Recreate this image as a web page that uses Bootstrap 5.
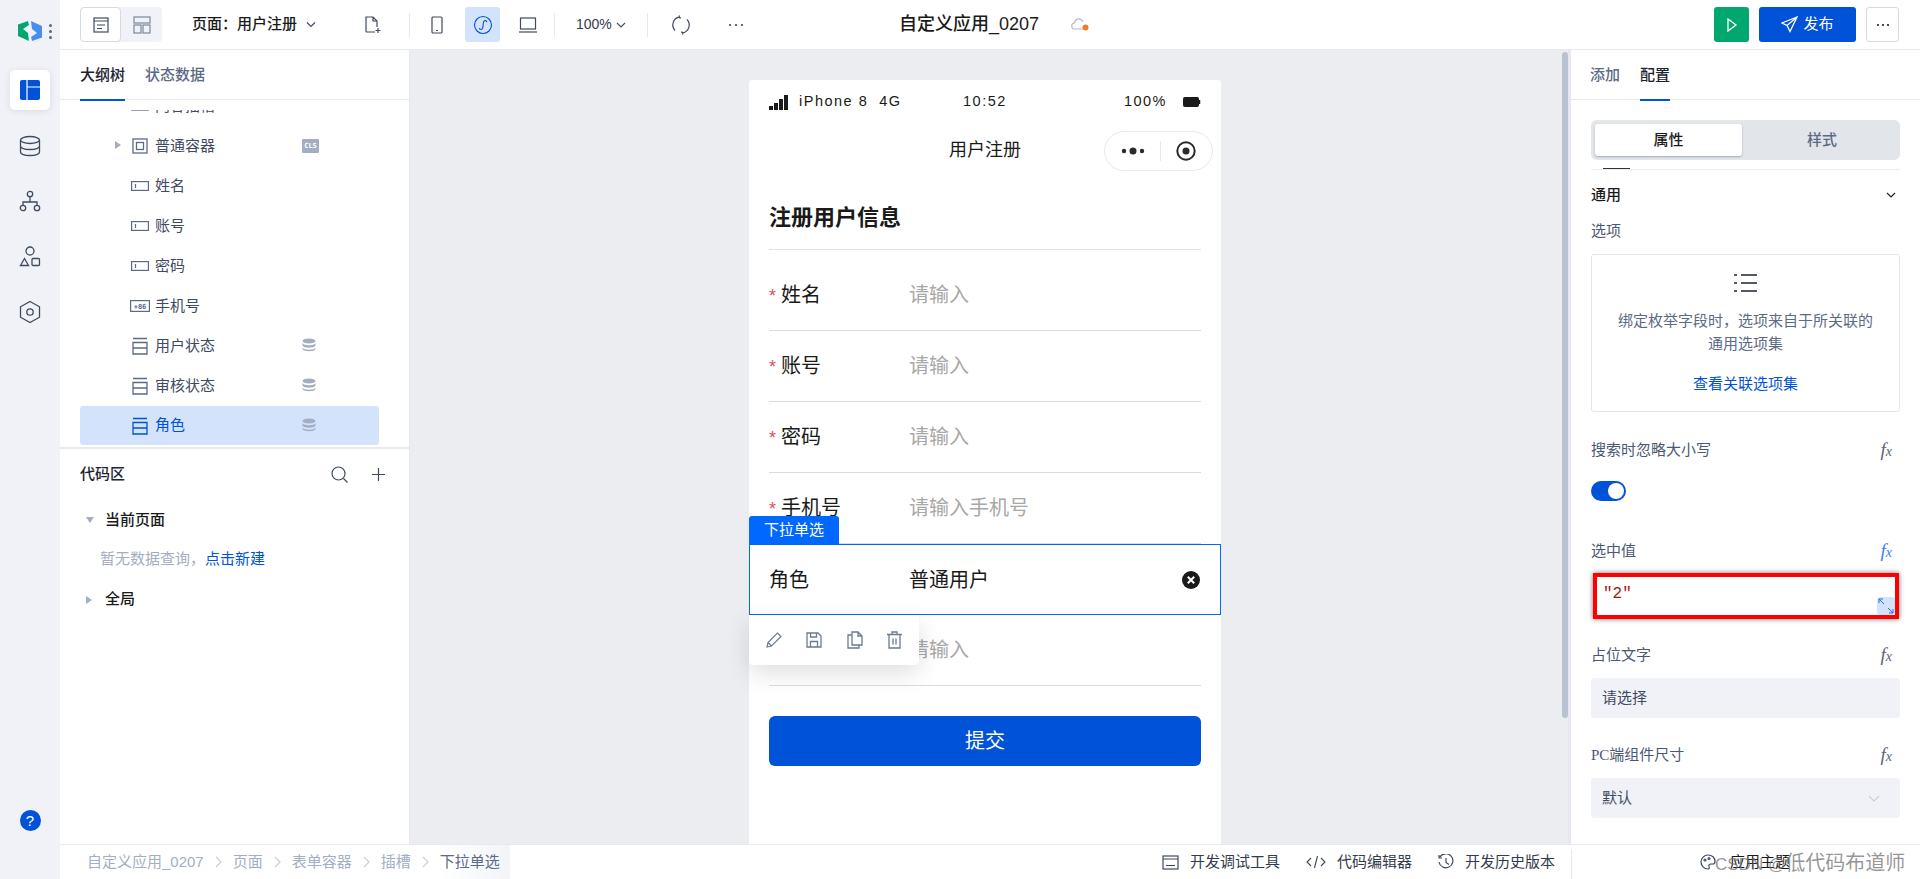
<!DOCTYPE html>
<html lang="zh-CN">
<head>
  <meta charset="UTF-8">
  <title>自定义应用_0207</title>
  <meta name="viewport" content="width=device-width, initial-scale=1">
  <link href="https://cdn.jsdelivr.net/npm/bootstrap@5.3.3/dist/css/bootstrap.min.css" rel="stylesheet">
  <style>
    html, body { height: 100%; overflow: hidden; }
    body {
      font-family: "Liberation Sans", "Noto Sans CJK SC", sans-serif;
      font-size: 15px;
      color: #1c2333;
      background: #fff;
    }
    svg { display: block; flex: none; }
    .app-shell { height: 879px; }

    /* left rail */
    .rail { width: 60px; background: #f0f2f7; padding-top: 13px; flex: none; }
    .rail-logo { height: 36px; margin-bottom: 21px; padding-left: 18px; gap: 7px; }
    .rail-dots { gap: 3px; }
    .rail-dots i { width: 3px; height: 3px; border-radius: 50%; background: #5a6478; display: block; }
    .rail-tile { width: 40px; height: 40px; margin: 0 auto 15.3px; display: flex; align-items: center; justify-content: center; border-radius: 5px; }
    .rail-tile.on { background: #fff; box-shadow: 0 1px 6px rgba(40, 60, 100, .12); margin-bottom: 16px; }
    .rail-help { width: 21px; height: 21px; border-radius: 50%; background: #0052d9; color: #fff; font-size: 15px; line-height: 21px; text-align: center; margin: auto auto 48px; }

    /* top bar */
    .topbar { height: 50px; border-bottom: 1px solid #e7e9ee; padding-left: 20px; flex: none; position: relative; }
    .seg-pages { width: 82px; height: 35px; background: #f0f2f7; border-radius: 4px; }
    .seg-pages span { width: 41px; display: flex; align-items: center; justify-content: center; }
    .seg-pages .on { background: #fff; border: 1px solid #d5dae3; border-radius: 4px; }
    .page-pick { margin-left: 30px; font-weight: 500; color: #1a1a1a; width: 162px; }
    .tool-sep { width: 1px; height: 24px; background: #e7e9ee; }
    .tool-active { width: 35px; height: 35px; background: #d3e3fb; border-radius: 3px; display: flex; align-items: center; justify-content: center; }
    .zoom-val { font-size: 14px; color: #333b4c; }
    .app-name { position: absolute; left: 839px; top: 11px; font-size: 18px; font-weight: 500; color: #1a1a1a; }
    .cloud { position: absolute; left: 1011px; top: 16px; }
    .top-actions { position: absolute; right: 21px; top: 7px; gap: 10px; }
    .act-run { width: 35px; height: 35px; background: #00a870; border-radius: 3px; }
    .act-pub { width: 97px; height: 35px; background: #0052d9; color: #fff; border-radius: 3px; gap: 5px; font-size: 15px; }
    .act-more { width: 33px; height: 35px; border: 1px solid #d5dae3; border-radius: 3px; }

    /* left panel */
    .outline { width: 350px; border-right: 1px solid #e7e9ee; flex: none; }
    .panel-tabs { height: 50px; border-bottom: 1px solid #e7e9ee; padding-left: 20px; gap: 20px; flex: none; }
    .config .panel-tabs { padding-left: 19px; }
    .panel-tab { line-height: 49px; color: #5b6a85; position: relative; height: 50px; font-weight: 500; }
    .panel-tab.on { color: #1c2333; }
    .panel-tab.on::after { content: ""; position: absolute; left: 0; right: 0; bottom: -1px; height: 2px; background: #0052d9; }
    .tree { height: 347px; flex: none; padding: 10px 30px 0 20px; }
    .tree-scroll { height: 337px; overflow: hidden; }
    .tree-row { height: 40px; padding-left: 51px; gap: 6px; color: #3f4a5f; position: relative; }
    .tree-row.cut { margin-top: -24px; }
    .tree-row .tree-ico { width: 18px; display: flex; justify-content: center; }
    .tree-row.sel { height: 39px; background: #d3e3fb; border-radius: 3px; color: #0052d9; }
    .tree-arrow { position: absolute; left: 35px; top: 15px; width: 0; height: 0; border-left: 6px solid #a3aec2; border-top: 4px solid transparent; border-bottom: 4px solid transparent; }
    .tree-tail { position: absolute; left: 222px; top: 12px; }
    .cls-tag { position: absolute; left: 222px; top: 13px; background: #a3aec2; color: #fff; width: 17px; height: 14px; font: 700 7px/14px "DejaVu Sans Mono", monospace; text-align: center; border-radius: 1px; }
    .code-area { border-top: 2px solid #e7e9ee; padding: 0 20px; flex: 1; }
    .code-head { height: 51px; font-weight: 500; color: #1c2333; }
    .code-row { height: 40px; padding-left: 25px; font-weight: 500; color: #1a1a1a; position: relative; }
    .code-row i { position: absolute; left: 6px; top: 17px; width: 0; height: 0; }
    .tri-down { border-top: 6px solid #a3aec2; border-left: 4px solid transparent; border-right: 4px solid transparent; }
    .tri-right { border-left: 6px solid #a3aec2; border-top: 4px solid transparent; border-bottom: 4px solid transparent; }
    .code-empty { height: 39px; padding-left: 20px; color: #a3aec2; }
    .code-empty a, .blue-link { color: #0052d9; text-decoration: none; }

    /* canvas and phone */
    .stage { background: #ebedf1; flex: 1; position: relative; min-width: 0; }
    .phone { width: 472px; margin-left: 339px; margin-top: 30px; background: #fff; height: 764px; position: relative; border-radius: 3px 3px 0 0; }
    .phone-status { height: 40px; padding: 4px 20px 0; font-size: 14.5px; letter-spacing: 1.5px; color: #1a1a1a; position: relative; }
    .phone-time { position: absolute; left: 214px; top: 11px; }
    .phone-nav { height: 60px; text-align: center; line-height: 60px; font-size: 18px; color: #1a1a1a; position: relative; }
    .capsule { position: absolute; left: 355px; top: 11px; width: 109px; height: 40px; background: #fff; border: 1px solid #e7e9ee; border-radius: 20px; }
    .capsule-sep { width: 1px; height: 20px; background: #e7e9ee; margin: 0 15px; }
    .form-title { margin: 0 20px 10px; height: 70px; border-bottom: 1px solid #dfe1e5; font-size: 22px; font-weight: 700; color: #1a1a1a; line-height: 75px; }
    .form-line { height: 71px; margin: 0 20px; border-bottom: 1px solid #dcdcdc; font-size: 20px; color: #1a1a1a; }
    .form-line.free { margin: 0; padding: 0 20px 0 19px; border: 1px solid #0068ff; height: 71px; margin-top: 0; position: relative; }
    .line-label { width: 140px; flex: none; }
    .req { color: #e34d59; font-size: 18px; margin-right: 5px; }
    .hint { color: #a8a8a8; }
    .clear-btn { margin-left: auto; }
    .comp-tag { position: absolute; left: 0; top: 436px; width: 90px; height: 28px; background: #0068ff; color: #fff; font-size: 15px; line-height: 28px; text-align: center; border-radius: 3px 3px 0 0; z-index: 2; }
    .comp-tools { position: absolute; left: 0; top: 535px; width: 170px; height: 50px; background: #fff; border-radius: 0 0 4px 4px; box-shadow: 0 8px 24px rgba(0, 0, 0, .13); padding: 0 17px; justify-content: space-between; z-index: 2; }
    .submit-btn { display: block; width: 432px; height: 50px; margin: 30px 20px 0; background: #0052d9; color: #fff; border: 0; border-radius: 6px; font-size: 20px; }

    .scroll-gutter { width: 11px; flex: none; background: #ebedf1; border-right: 3px solid #e5e8ee; position: relative; }
    .scroll-thumb { position: absolute; left: 2px; top: 2px; width: 6px; height: 666px; border-radius: 3px; background: #b9c2d0; }

    /* right panel */
    .config { width: 349px; flex: none; }
    .config-body { padding: 20px 20px 0; flex: 1; overflow: hidden; }
    .seg-config { height: 40px; background: #e2e5ea; border-radius: 6px; padding: 4px; color: #5b6a85; font-weight: 500; text-align: center; line-height: 32px; }
    .seg-config div { flex: 1; padding-left: 6px; }
    .seg-config .on { background: #fff; color: #1a1a1a; border-radius: 3px; box-shadow: 0 1px 2px rgba(50, 70, 100, .35); flex: none; width: 147px; padding-left: 0; }
    .sect-line { height: 10px; border-bottom: 1px solid #eceef2; position: relative; }
    .sect-line::before { content: ""; position: absolute; left: 12px; bottom: 0; width: 27px; height: 1px; background: #333; }
    .sect-head { height: 50px; font-weight: 500; color: #1a1a1a; padding-right: 4px; }
    .prop-label { color: #4b5873; height: 22px; line-height: 22px; padding-right: 8px; }
    .bind-box { height: 158px; border: 1px solid #e2e5ea; border-radius: 3px; margin-top: 12px; text-align: center; color: #5b6a85; line-height: 23px; padding-top: 18px; margin-bottom: 27px; }
    .bind-box svg { margin: 0 auto 16px; }
    .bind-box .blue-link { display: block; margin-top: 17px; }
    .fake-switch { width: 35px; height: 20px; border-radius: 10px; background: #0052d9; margin: 20px 0 39px; position: relative; }
    .fake-switch::after { content: ""; position: absolute; right: 2px; top: 2px; width: 16px; height: 16px; border-radius: 50%; background: #fff; }
    .fx { font-family: "Liberation Serif", serif; font-style: italic; font-size: 19px; color: #5a6478; line-height: 22px; margin-left: -2px; }
    .fx em { font-size: 14px; }
    .fx.active { color: #3f7fe8; }
    .code-box { height: 46px; margin: 11px 1px 25px 2px; border: 4px solid #f00; box-shadow: 0 0 5px rgba(0, 0, 0, .55); font: 16px/34px "Liberation Mono", monospace; color: #a31515; padding-left: 6px; position: relative; }
    .code-expand { position: absolute; right: 0; bottom: 0; width: 18px; height: 18px; background: #d3e3fb; border-radius: 3px; }
    .prop-input { height: 40px; background: #f0f2f7; border-radius: 3px; padding: 0 11px; color: #3f4a5f; margin: 12px 0 26px; justify-content: space-between; }
    .pc-text { font-family: "Liberation Serif", serif; }

    /* bottom bar */
    .bottombar { height: 35px; border-top: 1px solid #e7e9ee; padding-left: 27px; flex: none; color: #a3aec2; position: relative; }
    .crumb-sep { margin: 0 11px; }
    .crumb-last { background: linear-gradient(to right, #fff, #f2f4f8); padding-right: 10px; color: #5b6a85; height: 34px; line-height: 34px; }
    .dev-tools { position: absolute; right: 365px; top: 0; height: 34px; gap: 26px; color: #333b4c; font-size: 15px; }
    .dev-tools div { gap: 11px; }
    .bar-sep { position: absolute; left: 1511px; top: 4px; width: 1px; height: 30px; background: #e7e9ee; }
    .theme-btn { position: absolute; left: 1640px; top: 0; height: 34px; gap: 14px; color: #1a1a1a; }
    .watermark { position: absolute; left: 1655px; top: 3px; font-size: 20px; line-height: 30px; color: rgba(110, 110, 110, .72); white-space: nowrap; }
    .watermark span { font-size: 17px; }
  </style>
</head>
<body>
<div class="app-shell d-flex">
  <aside class="rail d-flex flex-column">
    <div class="rail-logo d-flex align-items-center">
      <svg width="24" height="20" viewBox="0 0 24 20"><path d="M0 3.500L10 0l1 4-6 4 5 4 1 8L0 15z" fill="#00a870"/><path d="M24 16.500L14 20l-1-4 6-4-5-4-1-8 11 5z" fill="#4a8df0"/></svg>
      <div class="rail-dots d-flex flex-column"><i></i><i></i><i></i></div>
    </div>
    <div class="rail-tile on"><svg width="20" height="20" viewBox="0 0 20 20"><rect width="20" height="20" rx="2" fill="#0052d9"/><path d="M7 0v20M7 7h13" stroke="#fff" stroke-width="1.2"/></svg></div>
    <div class="rail-tile"><svg width="22" height="22" viewBox="0 0 22 22" fill="none" stroke="#3f4a5f" stroke-width="1.3"><ellipse cx="11" cy="5" rx="9.5" ry="3.5"/><path d="M1.5 5v12c0 2 4 3.500 9.500 3.500s9.500-1.500 9.500-3.500V5M1.500 11c0 2 4 3.500 9.500 3.500s9.500-1.500 9.500-3.500"/></svg></div>
    <div class="rail-tile"><svg width="22" height="22" viewBox="0 0 22 22" fill="none" stroke="#3f4a5f" stroke-width="1.3"><circle cx="11" cy="4" r="2.700"/><circle cx="4" cy="18" r="2.700"/><circle cx="18" cy="18" r="2.700"/><path d="M11 7v5M4 15v-3h14v3"/></svg></div>
    <div class="rail-tile"><svg width="22" height="22" viewBox="0 0 22 22" fill="none" stroke="#3f4a5f" stroke-width="1.3"><circle cx="11" cy="5" r="4"/><path d="M5.500 12.500l4 7h-8z"/><rect x="13" y="12.500" width="7.500" height="7" rx="1"/></svg></div>
    <div class="rail-tile"><svg width="22" height="24" viewBox="0 0 22 24" fill="none" stroke="#3f4a5f" stroke-width="1.300"><path d="M11 1.500l9.500 5.300v10.400L11 22.500 1.500 17.200V6.800z"/><circle cx="11" cy="12" r="3.200"/></svg></div>
    <div class="rail-help">?</div>
  </aside>

  <div class="flex-grow-1 d-flex flex-column" style="min-width:0">
    <header class="topbar d-flex align-items-center">
      <div class="seg-pages d-flex">
        <span class="on"><svg width="16" height="16" viewBox="0 0 16 16" fill="none" stroke="#3f4a5f" stroke-width="1.200"><rect x="1" y="1" width="14" height="14"/><path d="M1 4h14M4 8h8M4 11.500h5"/></svg></span>
        <span><svg width="18" height="18" viewBox="0 0 18 18" fill="none" stroke="#7b879c" stroke-width="1.200"><rect x="1" y="1" width="16" height="6"/><rect x="1" y="9" width="7" height="8"/><rect x="10" y="9" width="7" height="8"/></svg></span>
      </div>
      <div class="page-pick d-flex align-items-center gap-2"><span>页面：用户注册</span><svg width="12" height="8" viewBox="0 0 12 8" fill="none" stroke="#3f4a5f" stroke-width="1.200"><path d="M2 1.500l4 4 4-4"/></svg></div>
      <svg width="16" height="18" viewBox="0 0 16 18" fill="none" stroke="#3f4a5f" stroke-width="1.200" style="margin-left:11px"><path d="M10 16H2a1 1 0 0 1-1-1V1h7l4 4v6M8 1v4h4M13 12v5M10.500 14.500h5"/></svg>
      <span class="tool-sep" style="margin-left:28px"></span>
      <svg width="12" height="18" viewBox="0 0 12 18" fill="none" stroke="#3f4a5f" stroke-width="1.200" style="margin-left:21px"><rect x="1" y="1" width="10" height="16" rx="1"/><path d="M5 14.500h2"/></svg>
      <span class="tool-active" style="margin-left:22px"><svg width="20" height="20" viewBox="0 0 20 20" fill="none" stroke="#0052d9" stroke-width="1.100"><circle cx="10" cy="10" r="8.500"/><path d="M6.500 13c0 2 3 2 3.300-.5l.6-5c.3-2.500 3.500-2.500 3.300-.3"/></svg></span>
      <svg width="18" height="16" viewBox="0 0 18 16" fill="none" stroke="#3f4a5f" stroke-width="1.200" style="margin-left:19px"><rect x="1.500" y="1" width="15" height="11"/><path d="M0 15h18"/></svg>
      <span class="tool-sep" style="margin-left:17px"></span>
      <span class="zoom-val d-flex align-items-center gap-1" style="margin-left:21px">100%<svg width="10" height="6" viewBox="0 0 10 6" fill="none" stroke="#3f4a5f" stroke-width="1.100"><path d="M1 1l4 4 4-4"/></svg></span>
      <span class="tool-sep" style="margin-left:21px"></span>
      <svg width="20" height="20" viewBox="0 0 20 20" fill="none" stroke="#3f4a5f" stroke-width="1.200" style="margin-left:23px"><path d="M4 15.500A8 8 0 0 1 8 2.200M16 4.500a8 8 0 0 1-4 13.300M8.500 .5L8 2.300l1.800.8M11.500 19.500l.5-1.800-1.800-.8"/></svg>
      <svg width="16" height="4" viewBox="0 0 16 4" fill="#3f4a5f" style="margin-left:37px"><circle cx="2" cy="2" r="1.100"/><circle cx="8" cy="2" r="1.100"/><circle cx="14" cy="2" r="1.100"/></svg>
      <div class="app-name">自定义应用_0207</div>
      <svg class="cloud" width="20" height="16" viewBox="0 0 20 16" fill="none"><path d="M12 13H4a3 3 0 0 1-.5-6C4 2.500 10 1 12 6" stroke="#b4bccb" stroke-width="1.200"/><circle cx="14.500" cy="11.500" r="3" fill="#ed7b2f"/></svg>
      <div class="top-actions d-flex">
        <div class="act-run d-flex align-items-center justify-content-center"><svg width="12" height="14" viewBox="0 0 12 14" fill="none" stroke="#fff" stroke-width="1.300"><path d="M2 1l8 6-8 6z"/></svg></div>
        <div class="act-pub d-flex align-items-center justify-content-center"><svg width="17" height="17" viewBox="0 0 17 17" fill="none" stroke="#fff" stroke-width="1.300"><path d="M16 1L1 7l5 2.500L9 15.500zM6 9.500L16 1"/></svg>发布</div>
        <div class="act-more d-flex align-items-center justify-content-center"><svg width="14" height="4" viewBox="0 0 14 4" fill="#1c2333"><circle cx="2" cy="2" r="1.100"/><circle cx="7" cy="2" r="1.100"/><circle cx="12" cy="2" r="1.100"/></svg></div>
      </div>
    </header>

    <div class="d-flex flex-grow-1" style="min-height:0">
      <section class="outline d-flex flex-column">
        <div class="panel-tabs d-flex">
          <div class="panel-tab on">大纲树</div>
          <div class="panel-tab">状态数据</div>
        </div>
        <div class="tree">
          <div class="tree-scroll">
            <div class="tree-row cut d-flex align-items-center"><span class="tree-ico"><svg width="18" height="10" viewBox="0 0 18 10" fill="none" stroke="#5b6a85" stroke-width="1.300"><rect x="1" y="1" width="16" height="8"/></svg></span><span>内容插槽</span></div>
            <div class="tree-row d-flex align-items-center"><i class="tree-arrow"></i><span class="tree-ico"><svg width="16" height="16" viewBox="0 0 16 16" fill="none" stroke="#5b6a85" stroke-width="1.300"><rect x="1" y="1" width="14" height="14"/><rect x="4.500" y="4.500" width="7" height="7"/></svg></span><span>普通容器</span><span class="cls-tag">CLS</span></div>
            <div class="tree-row d-flex align-items-center"><span class="tree-ico"><svg width="18" height="10" viewBox="0 0 18 10" fill="none" stroke="#5b6a85" stroke-width="1.200"><rect x=".6" y=".6" width="16.800" height="8.800"/><path d="M4.500 3v4"/></svg></span><span>姓名</span></div>
            <div class="tree-row d-flex align-items-center"><span class="tree-ico"><svg width="18" height="10" viewBox="0 0 18 10" fill="none" stroke="#5b6a85" stroke-width="1.200"><rect x=".6" y=".6" width="16.800" height="8.800"/><path d="M4.500 3v4"/></svg></span><span>账号</span></div>
            <div class="tree-row d-flex align-items-center"><span class="tree-ico"><svg width="18" height="10" viewBox="0 0 18 10" fill="none" stroke="#5b6a85" stroke-width="1.200"><rect x=".6" y=".6" width="16.800" height="8.800"/><path d="M4.500 3v4"/></svg></span><span>密码</span></div>
            <div class="tree-row d-flex align-items-center"><span class="tree-ico"><svg width="20" height="12" viewBox="0 0 20 12"><rect x=".6" y=".6" width="18.800" height="10.800" fill="none" stroke="#5b6a85" stroke-width="1.200"/><text x="10" y="9" text-anchor="middle" font-family="DejaVu Sans Mono" font-weight="700" font-size="7" fill="#5b6a85">+86</text></svg></span><span>手机号</span></div>
            <div class="tree-row d-flex align-items-center"><span class="tree-ico"><svg width="16" height="18" viewBox="0 0 16 18" fill="none" stroke="#5b6a85" stroke-width="1.300"><path d="M1 1.500h14M1 17V5.500h14V17zM1 11h14"/></svg></span><span>用户状态</span><span class="tree-tail"><svg width="14" height="14" viewBox="0 0 14 14" fill="#a3aec2"><ellipse cx="7" cy="3" rx="6.500" ry="2.500"/><path d="M.5 5c1 3 12 3 13 0v2.500c-1 3-12 3-13 0zM.5 9.500c1 3 12 3 13 0V11c-1 3-12 3-13 0z"/></svg></span></div>
            <div class="tree-row d-flex align-items-center"><span class="tree-ico"><svg width="16" height="18" viewBox="0 0 16 18" fill="none" stroke="#5b6a85" stroke-width="1.300"><path d="M1 1.500h14M1 17V5.500h14V17zM1 11h14"/></svg></span><span>审核状态</span><span class="tree-tail"><svg width="14" height="14" viewBox="0 0 14 14" fill="#a3aec2"><ellipse cx="7" cy="3" rx="6.500" ry="2.500"/><path d="M.5 5c1 3 12 3 13 0v2.500c-1 3-12 3-13 0zM.5 9.500c1 3 12 3 13 0V11c-1 3-12 3-13 0z"/></svg></span></div>
            <div class="tree-row sel d-flex align-items-center"><span class="tree-ico"><svg width="16" height="18" viewBox="0 0 16 18" fill="none" stroke="#0052d9" stroke-width="1.300"><path d="M1 1.500h14M1 17V5.500h14V17zM1 11h14"/></svg></span><span>角色</span><span class="tree-tail"><svg width="14" height="14" viewBox="0 0 14 14" fill="#a3aec2"><ellipse cx="7" cy="3" rx="6.500" ry="2.500"/><path d="M.5 5c1 3 12 3 13 0v2.500c-1 3-12 3-13 0zM.5 9.500c1 3 12 3 13 0V11c-1 3-12 3-13 0z"/></svg></span></div>
          </div>
        </div>
        <div class="code-area">
          <div class="code-head d-flex align-items-center justify-content-between">
            <span>代码区</span>
            <span class="d-flex align-items-center gap-4" style="margin-right:4px">
              <svg width="17" height="17" viewBox="0 0 17 17" fill="none" stroke="#3f4a5f" stroke-width="1.200"><circle cx="7.500" cy="7.500" r="6.500"/><path d="M12.500 12.500l4 4"/></svg>
              <svg width="13" height="13" viewBox="0 0 13 13" fill="none" stroke="#3f4a5f" stroke-width="1.200"><path d="M6.500 0v13M0 6.500h13"/></svg>
            </span>
          </div>
          <div class="code-row d-flex align-items-center"><i class="tri-down"></i>当前页面</div>
          <div class="code-empty d-flex align-items-center">暂无数据查询，<a href="#">点击新建</a></div>
          <div class="code-row d-flex align-items-center"><i class="tri-right"></i>全局</div>
        </div>
      </section>

      <main class="stage">
        <div class="phone">
          <div class="phone-status d-flex align-items-center">
            <svg width="20" height="15" viewBox="0 0 20 15" fill="#1a1a1a" style="margin-right:10px"><rect x="0" y="11" width="4" height="4"/><rect x="5" y="8" width="4" height="7"/><rect x="10" y="4" width="4" height="11"/><rect x="15" y="0" width="4" height="15"/></svg>
            <span>iPhone 8&nbsp;&nbsp;4G</span>
            <span class="phone-time">10:52</span>
            <span class="ms-auto d-flex align-items-center gap-3">100% <svg width="18" height="10" viewBox="0 0 18 10"><rect x=".5" y=".5" width="15" height="9" rx="1" fill="#1a1a1a" stroke="#1a1a1a"/><path d="M16.500 3v4" stroke="#1a1a1a" stroke-width="1.500"/></svg></span>
          </div>
          <div class="phone-nav">用户注册
            <div class="capsule d-flex align-items-center justify-content-center">
              <svg width="24" height="8" viewBox="0 0 24 8" fill="#2a2a2a"><circle cx="3" cy="4" r="2.200"/><circle cx="12" cy="4" r="3.500"/><circle cx="21" cy="4" r="2.200"/></svg>
              <span class="capsule-sep"></span>
              <svg width="20" height="20" viewBox="0 0 20 20"><circle cx="10" cy="10" r="8.700" fill="none" stroke="#2a2a2a" stroke-width="2"/><circle cx="10" cy="10" r="3.500" fill="#2a2a2a"/></svg>
            </div>
          </div>
          <div class="form-title">注册用户信息</div>
          <div class="form-line d-flex align-items-center"><span class="line-label"><span class="req">*</span>姓名</span><span class="hint">请输入</span></div>
          <div class="form-line d-flex align-items-center"><span class="line-label"><span class="req">*</span>账号</span><span class="hint">请输入</span></div>
          <div class="form-line d-flex align-items-center"><span class="line-label"><span class="req">*</span>密码</span><span class="hint">请输入</span></div>
          <div class="form-line d-flex align-items-center"><span class="line-label"><span class="req">*</span>手机号</span><span class="hint">请输入手机号</span></div>
          <div class="form-line free d-flex align-items-center"><span class="line-label">角色</span><span>普通用户</span>
            <svg class="clear-btn" width="18" height="18" viewBox="0 0 18 18"><circle cx="9" cy="9" r="9" fill="#1a1a1a"/><path d="M5.800 5.800l6.400 6.400M12.200 5.800l-6.400 6.400" stroke="#fff" stroke-width="2"/></svg>
          </div>
          <div class="form-line d-flex align-items-center"><span class="line-label"></span><span class="hint">请输入</span></div>
          <button class="submit-btn" type="button">提交</button>
          <div class="comp-tag">下拉单选</div>
          <div class="comp-tools d-flex align-items-center">
            <svg width="16" height="16" viewBox="0 0 16 16" fill="none" stroke="#6d7a91" stroke-width="1.200"><path d="M1 15l1-4.500L11.500 1l3.500 3.500L5.500 14zM2 10.500L5.500 14"/></svg>
            <svg width="16" height="16" viewBox="0 0 16 16" fill="none" stroke="#6d7a91" stroke-width="1.300"><path d="M1 1h11l3 3v11H1zM4.500 1v4h6V1M4.500 15V9.500h7V15"/></svg>
            <svg width="16" height="18" viewBox="0 0 16 18" fill="none" stroke="#6d7a91" stroke-width="1.300"><path d="M5 14V1h6l4 4v9zM11 1v4h4M5 4H1v13h11v-3"/></svg>
            <svg width="15" height="18" viewBox="0 0 15 18" fill="none" stroke="#6d7a91" stroke-width="1.300"><path d="M2 4v13h11V4M0 3.500h15M5 3.500V1h5v2.500M6 7.500v6M9 7.500v6"/></svg>
          </div>
        </div>
      </main>
      <div class="scroll-gutter"><div class="scroll-thumb"></div></div>

      <aside class="config d-flex flex-column">
        <div class="panel-tabs d-flex">
          <div class="panel-tab">添加</div>
          <div class="panel-tab on">配置</div>
        </div>
        <div class="config-body">
          <div class="seg-config d-flex"><div class="on">属性</div><div>样式</div></div>
          <div class="sect-line"></div>
          <div class="sect-head d-flex align-items-center justify-content-between">通用<svg width="10" height="6" viewBox="0 0 10 6" fill="none" stroke="#1c2333" stroke-width="1.200"><path d="M1 1l4 4 4-4"/></svg></div>
          <div class="prop-label">选项</div>
          <div class="bind-box">
            <svg width="23" height="20" viewBox="0 0 23 20" fill="none" stroke="#1c2333" stroke-width="1.400"><path d="M7 2h16M7 10h16M7 18h16M0 2h3M0 10h3M0 18h3"/></svg>
            绑定枚举字段时，选项来自于所关联的<br>通用选项集
            <a class="blue-link" href="#">查看关联选项集</a>
          </div>
          <div class="prop-label d-flex justify-content-between">搜索时忽略大小写<span class="fx">f<em>x</em></span></div>
          <div class="fake-switch"></div>
          <div class="prop-label d-flex justify-content-between">选中值<span class="fx active">f<em>x</em></span></div>
          <div class="code-box">"2"<span class="code-expand"><svg width="18" height="18" viewBox="0 0 18 18" fill="none" stroke="#2a6be0" stroke-width="1"><path d="M2 2l5 5M16 16l-5-5M2 6V2h4M16 12v4h-4"/></svg></span></div>
          <div class="prop-label d-flex justify-content-between">占位文字<span class="fx">f<em>x</em></span></div>
          <div class="prop-input d-flex align-items-center">请选择</div>
          <div class="prop-label d-flex justify-content-between"><span><span class="pc-text">PC</span>端组件尺寸</span><span class="fx">f<em>x</em></span></div>
          <div class="prop-input d-flex align-items-center">默认<svg width="12" height="7" viewBox="0 0 12 7" fill="none" stroke="#c8cfda" stroke-width="1.100" style="margin-right:9px"><path d="M1 1l5 5 5-5"/></svg></div>
        </div>
      </aside>
    </div>

    <footer class="bottombar d-flex align-items-center">
      <span>自定义应用_0207</span>
      <svg class="crumb-sep" width="7" height="12" viewBox="0 0 7 12" fill="none" stroke="#c8cfda" stroke-width="1.200"><path d="M1 1l5 5-5 5"/></svg>
      <span>页面</span>
      <svg class="crumb-sep" width="7" height="12" viewBox="0 0 7 12" fill="none" stroke="#c8cfda" stroke-width="1.200"><path d="M1 1l5 5-5 5"/></svg>
      <span>表单容器</span>
      <svg class="crumb-sep" width="7" height="12" viewBox="0 0 7 12" fill="none" stroke="#c8cfda" stroke-width="1.200"><path d="M1 1l5 5-5 5"/></svg>
      <span>插槽</span>
      <svg class="crumb-sep" width="7" height="12" viewBox="0 0 7 12" fill="none" stroke="#c8cfda" stroke-width="1.200"><path d="M1 1l5 5-5 5"/></svg>
      <span class="crumb-last">下拉单选</span>
      <div class="dev-tools d-flex align-items-center">
        <div class="d-flex align-items-center"><svg width="17" height="15" viewBox="0 0 17 15" fill="none" stroke="#3f4a5f" stroke-width="1.200"><rect x="1" y="1" width="15" height="13"/><path d="M1 4h15M4 10.500h9"/></svg>开发调试工具</div>
        <div class="d-flex align-items-center"><svg width="20" height="14" viewBox="0 0 20 14" fill="none" stroke="#3f4a5f" stroke-width="1.100"><path d="M5 3L1 7l4 4M15 3l4 4-4 4M11.500 1L8.500 13"/></svg>代码编辑器</div>
        <div class="d-flex align-items-center"><svg width="16" height="16" viewBox="0 0 16 16" fill="none" stroke="#3f4a5f" stroke-width="1.200"><path d="M2 3a7 7 0 1 1-1 5M1 1v3h3M8 4v4.500l3 2"/></svg>开发历史版本</div>
      </div>
      <span class="bar-sep"></span>
      <div class="theme-btn d-flex align-items-center"><svg width="16" height="16" viewBox="0 0 16 16" fill="none" stroke="#3f4a5f" stroke-width="1.200"><path d="M8 1a7 7 0 0 0 0 14c1.500 0 1.500-1.500 1-2.500-.5-1.500 .5-2.500 2-2.500h2c1.500 0 2-1 2-2.500C15 3.500 12 1 8 1z"/><circle cx="5" cy="6" r="1"/><circle cx="9" cy="4.500" r="1"/></svg>应用主题</div>
      <div class="watermark"><span>CSDN @</span>低代码布道师</div>
    </footer>
  </div>
</div>
<script src="https://cdn.jsdelivr.net/npm/bootstrap@5.3.3/dist/js/bootstrap.bundle.min.js"></script>
</body>
</html>
